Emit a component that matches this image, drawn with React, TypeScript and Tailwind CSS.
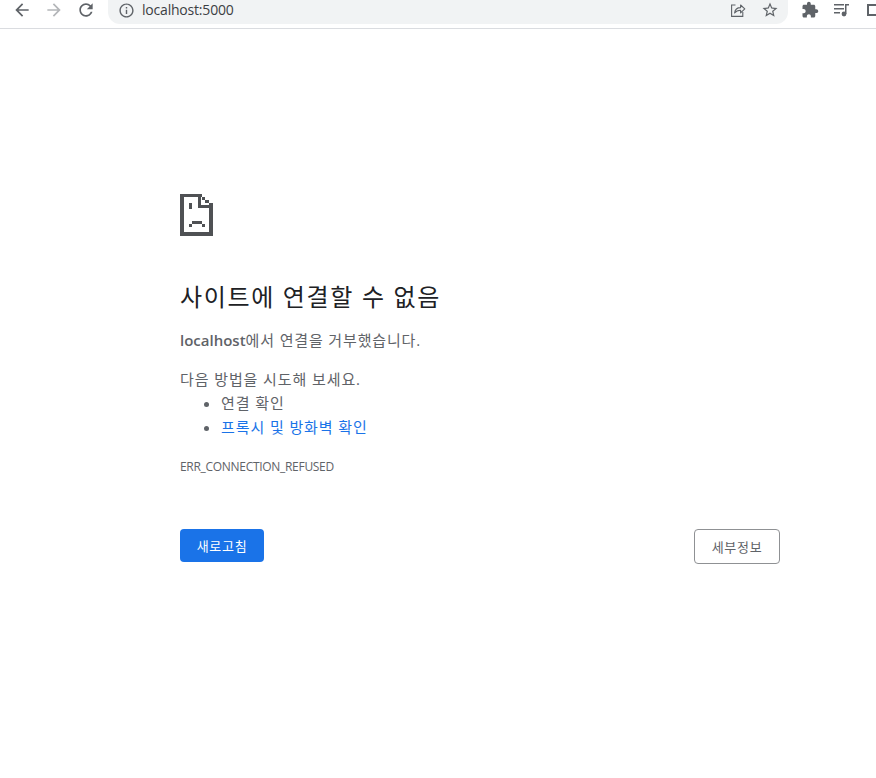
import React from "react";

const SANS = "font-['Segoe_UI','Open_Sans','Noto_Sans_CJK_KR',sans-serif]";

const Icon = ({ d, size = 18, className = "" }: { d: string; size?: number; className?: string }) => (
    <svg width={size} height={size} viewBox="0 0 24 24" fill="currentColor" className={`shrink-0 ${className}`}>
        <path d={d} />
    </svg>
);

const ARROW_LEFT = "M20 11H7.83l5.59-5.59L12 4l-8 8 8 8 1.41-1.41L7.83 13H20v-2z";
const ARROW_RIGHT = "M4 11h12.17l-5.59-5.59L12 4l8 8-8 8-1.41-1.41L16.17 13H4v-2z";
const RELOAD = "M17.65 6.35C16.2 4.9 14.21 4 12 4c-4.42 0-7.99 3.58-7.99 8s3.57 8 7.99 8c3.73 0 6.84-2.55 7.73-6h-2.08c-.82 2.33-3.04 4-5.65 4-3.31 0-6-2.69-6-6s2.69-6 6-6c1.66 0 3.14.69 4.22 1.78L13 11h7V4l-2.35 2.35z";
const INFO = "M11 7h2v2h-2zm0 4h2v6h-2zm1-9C6.48 2 2 6.48 2 12s4.48 10 10 10 10-4.48 10-10S17.52 2 12 2zm0 18c-4.41 0-8-3.59-8-8s3.59-8 8-8 8 3.59 8 8-3.59 8-8 8z";
const STAR = "M22 9.24l-7.19-.62L12 2 9.19 8.63 2 9.24l5.46 4.73L5.82 21 12 17.27 18.18 21l-1.63-7.03L22 9.24zM12 15.4l-3.76 2.27 1-4.28-3.32-2.88 4.38-.38L12 6.1l1.71 4.04 4.38.38-3.32 2.88 1 4.28L12 15.4z";
const EXTENSION = "M20.5 11H19V7c0-1.1-.9-2-2-2h-4V3.5C13 2.12 11.88 1 10.5 1S8 2.12 8 3.5V5H4c-1.1 0-1.99.9-1.99 2v3.8H3.5c1.49 0 2.7 1.21 2.7 2.7s-1.21 2.7-2.7 2.7H2V20c0 1.1.9 2 2 2h3.8v-1.5c0-1.49 1.21-2.7 2.7-2.7 1.49 0 2.7 1.21 2.7 2.7V22H17c1.1 0 2-.9 2-2v-4h1.5c1.38 0 2.5-1.12 2.5-2.5S21.88 11 20.5 11z";

const ShareIcon = () => (
    <svg width="16" height="16" viewBox="0 0 16 16" fill="none" stroke="#5f6368" strokeWidth="1.1" className="shrink-0">
        <path d="M5.5 3H1.6v11.4h11.2V10" />
        <path d="M4.6 11c.4-3.4 2.8-5.4 6-5.4V3l4.2 3.9-4.2 3.9V8.2C8.2 8.2 6 9 4.6 11z" strokeLinejoin="round" />
    </svg>
);

const QueueIcon = () => (
    <svg width="16" height="14" viewBox="0 0 16 14" fill="#5f6368" className="shrink-0">
        <rect x="0" y="1" width="10" height="1.5" />
        <rect x="0" y="5" width="10" height="1.5" />
        <rect x="0" y="9" width="6" height="1.5" />
        <rect x="11" y="1" width="4" height="1.5" />
        <rect x="11" y="1" width="1.5" height="10" />
        <circle cx="10" cy="11" r="2.4" />
    </svg>
);

// pixelated "sad tab" page
const SadTab = () => (
    <svg width="33" height="42" viewBox="0 0 33 42" fill="#4f5154" className="block">
        <rect x="0" y="0" width="4" height="42" />
        <rect x="0" y="38" width="33" height="4" />
        <rect x="29" y="14" width="4" height="28" />
        <rect x="0" y="0" width="22" height="3" />
        <rect x="18" y="0" width="3" height="14" />
        <rect x="18" y="11" width="15" height="3" />
        <rect x="22" y="3" width="3" height="3" />
        <rect x="25" y="6" width="4" height="3" />
        <rect x="29" y="9" width="4" height="3" />
        <rect x="9" y="9" width="3" height="6" />
        <rect x="12" y="27" width="10" height="3" />
        <rect x="9" y="30" width="3" height="3" />
        <rect x="22" y="30" width="3" height="3" />
    </svg>
);

export default function App() {
    return (
        <div className={`h-[778px] w-[876px] overflow-hidden bg-white ${SANS}`}>
            <div className="flex h-[29px] items-start overflow-hidden border-b border-[#dadce0] bg-white text-[#5f6368]">
                <div className="flex items-center gap-3 pl-3">
                    <Icon d={ARROW_LEFT} size={20} />
                    <Icon d={ARROW_RIGHT} size={20} className="text-[#b4b6b9]" />
                    <Icon d={RELOAD} size={20} />
                </div>
                <div className="ml-3 flex h-6 w-[680px] shrink-0 items-center rounded-b-xl bg-[#f1f3f4] pb-1 pl-[10px] pr-[9px]">
                    <Icon d={INFO} size={17} />
                    <span className="ml-[7px] mt-[-1px] text-sm tracking-[-0.2px] text-[#3c4043]">localhost:5000</span>
                    <div className="ml-auto flex items-center gap-[15px]">
                        <ShareIcon />
                        <Icon d={STAR} />
                    </div>
                </div>
                <div className="flex shrink-0 items-center pl-[13px] pt-px">
                    <Icon d={EXTENSION} />
                    <div className="ml-[15px]"><QueueIcon /></div>
                    <div className="ml-[17px] h-3 w-[14px] shrink-0 border-2 border-[#5f6368]" />
                </div>
            </div>

            <main className="ml-[180px] w-[600px] pt-[165px] text-[15px] leading-[24px] text-[#5f6368]">
                <SadTab />
                <h1 className="mt-[43px] text-2xl leading-[36px] tracking-[1.65px] text-[#202124]">사이트에 연결할 수 없음</h1>
                <p className="mt-[13px]">
                    <strong className="font-semibold">localhost</strong>
                    <span className="tracking-[0.85px]">에서 연결을 거부했습니다.</span>
                </p>
                <p className="mt-[15px] tracking-[0.9px]">다음 방법을 시도해 보세요.</p>
                <ul className="list-disc pl-[41px] tracking-[0.9px]">
                    <li>연결 확인</li>
                    <li><span className="text-[#1a73e8]">프록시 및 방화벽 확인</span></li>
                </ul>
                <p className="mt-[20px] text-xs tracking-[-0.3px] text-[#5f6368]">ERR_CONNECTION_REFUSED</p>
                <div className="mt-[54px] flex items-start justify-between">
                    <button className="h-[33px] w-[84px] rounded bg-[#1a73e8] text-[13px] tracking-[0.7px] text-white">새로고침</button>
                    <button className="h-[35px] w-[86px] rounded border border-[#8f9194] bg-white text-[13px] tracking-[0.7px] text-[#5f6368]">세부정보</button>
                </div>
            </main>
        </div>
    );
}
